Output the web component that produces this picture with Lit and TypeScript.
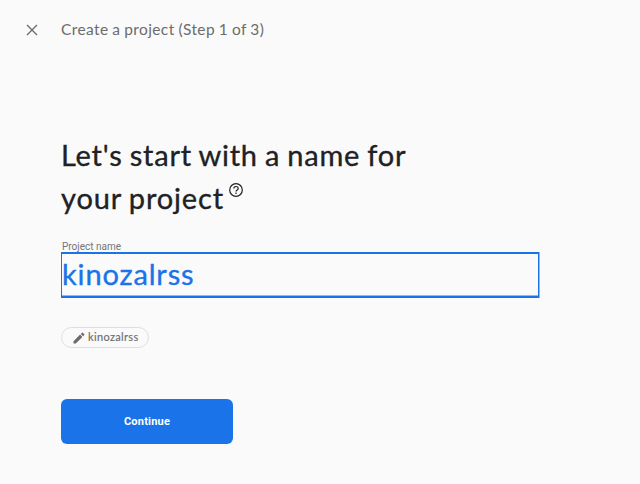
import { LitElement, html, css } from "lit";
import { customElement, state } from "lit/decorators.js";

@customElement("app-root")
export class AppRoot extends LitElement {
  @state() private name = "kinozalrss";

  static styles = css`
    :host {
      display: block;
      box-sizing: border-box;
      width: 640px;
      height: 484px;
      overflow: hidden;
      background: #fafafa;
      color: #202124;
      font-family: Lato, "Open Sans", sans-serif;
    }
    svg { display: block; }
    header {
      display: flex;
      align-items: center;
      height: 60px;
      padding-left: 26px;
      color: #6c6c6c;
    }
    .close { width: 12px; height: 12px; margin-right: 23px; }
    .step {
      margin-bottom: 2px;
      font-size: 15.5px;
      line-height: 20px;
      letter-spacing: 0.4px;
      word-spacing: -0.6px;
      white-space: nowrap;
    }
    main { display: flex; flex-direction: column; align-items: flex-start; padding: 73px 0 0 61px; }
    h1 { margin: 0; font-size: 29px; line-height: 43px; font-weight: 400; -webkit-text-stroke: 0.35px; }
    .line { display: flex; white-space: nowrap; }
    .first { letter-spacing: 0.78px; word-spacing: -1.1px; }
    .second { letter-spacing: 0.85px; word-spacing: -1px; }
    .help { margin: 7px 0 0 5px; width: 14px; height: 14px; }
    .label { margin-top: 22px; padding-left: 1px; height: 11px; font: 10px/11px Roboto, sans-serif; color: #757575; }
    .field {
      box-sizing: border-box;
      width: 478px;
      height: 46px;
      border: solid #1a73e8;
      border-width: 2px 1px 2px 1px;
      font-size: 29px;
      line-height: 39px;
      letter-spacing: 0.85px;
      color: #1a73e8;
      -webkit-text-stroke: 0.35px;
      box-shadow: inset 0 -1px #8cb8f3, 1px 0 #8cb8f3;
    }
    .chip {
      box-sizing: border-box;
      display: flex;
      align-items: center;
      gap: 3px;
      margin-top: 29px;
      width: 88px;
      height: 21px;
      padding-left: 11px;
      border: 1px solid #dedede;
      border-radius: 11px;
      color: #6c6c6c;
      font-size: 11px;
      letter-spacing: 0.35px;
      -webkit-text-stroke: 0.15px;
    }
    .chip span { line-height: 15px; margin-bottom: 2px; }
    .chip svg { width: 12px; height: 12px; }
    button {
      margin: 51px 0 0;
      padding: 0;
      width: 172px;
      height: 45px;
      border: 0;
      border-radius: 6px;
      background: #1a73e8;
      color: #fff;
      font: 700 11px/45px Roboto, sans-serif;
      letter-spacing: 0.2px;
    }
  `;

  render() {
    return html`
      <header>
        <svg class="close" viewBox="0 0 12 12" fill="none" stroke="currentColor" stroke-width="1.4">
          <path d="M1 1L11 11M11 1L1 11" />
        </svg>
        <span class="step">Create a project (Step 1 of 3)</span>
      </header>
      <main>
        <h1>
          <div class="line"><span class="first">Let's start with a name for</span></div>
          <div class="line">
            <span class="second">your project</span>
            <svg class="help" viewBox="0 0 14 14" fill="none" stroke="currentColor" stroke-width="1.2">
              <circle cx="7" cy="7" r="6.3" />
              <path d="M4.8 5.6C4.8 4.3 5.8 3.5 7 3.5S9.2 4.3 9.2 5.5C9.2 6.9 7 7 7 8.6" />
              <path d="M7 9.5V10.9" />
            </svg>
          </div>
        </h1>
        <div class="label">Project name</div>
        <div class="field">${this.name}</div>
        <div class="chip">
          <svg viewBox="0 0 12 12" fill="currentColor">
            <path d="M.5 9.2V11.5H2.8L9.4 4.9 7.1 2.6ZM7.8 1.9L10.1 4.2 11.3 3Q11.7 2.6 11.3 2.2L9.8.7Q9.4.3 9 .7Z" />
          </svg>
          <span>${this.name}</span>
        </div>
        <button>Continue</button>
      </main>
    `;
  }
}
